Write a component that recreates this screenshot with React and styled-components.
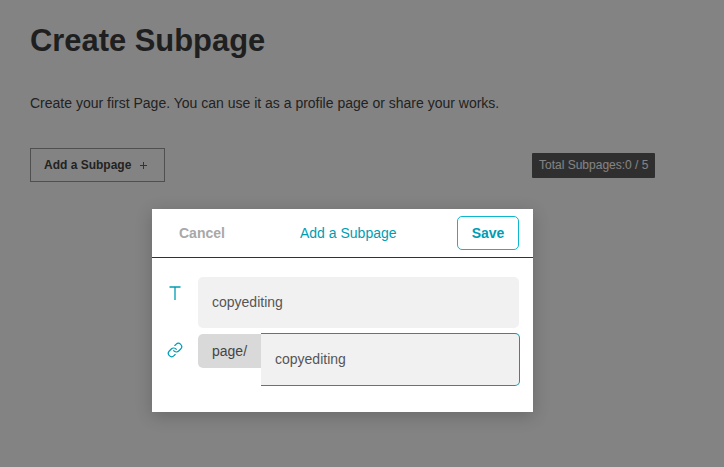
import React from "react";
import styled, { createGlobalStyle } from "styled-components";

const GlobalStyle = createGlobalStyle`
  html, body {
    margin: 0;
    padding: 0;
    background: #fff;
    font-family: "Liberation Sans", Arial, sans-serif;
  }
`;

const Page = styled.div`
  position: relative;
  width: 724px;
  height: 467px;
  overflow: hidden;
  box-sizing: border-box;
  padding: 24px 30px 0;
  color: #222;
`;

const Title = styled.h1`
  margin: 0;
  font-size: 30.9px;
  line-height: 34px;
  font-weight: 700;
  color: #3e3e3e;
`;

const Intro = styled.p`
  margin: 36px 0 0;
  font-size: 14px;
  line-height: 18px;
  color: #444;
`;

const ActionRow = styled.div`
  display: flex;
  align-items: center;
  justify-content: space-between;
  margin-top: 36px;
  padding-right: 39px;
`;

const AddButton = styled.button`
  display: flex;
  align-items: center;
  gap: 9px;
  box-sizing: border-box;
  width: 135px;
  height: 34px;
  padding: 0 0 0 13px;
  background: transparent;
  border: 1px solid #9a9a9a;
  font-family: inherit;
  font-size: 12px;
  font-weight: 700;
  color: #444;
`;

const Counter = styled.div`
  box-sizing: border-box;
  width: 123px;
  height: 25px;
  line-height: 25px;
  padding-left: 7px;
  border-radius: 1px;
  background: #5c5c5c;
  font-size: 12px;
  color: #fff;
  white-space: nowrap;
`;

const Overlay = styled.div`
  position: absolute;
  inset: 0;
  background: rgba(0, 0, 0, 0.487);
  display: flex;
  align-items: flex-start;
  justify-content: flex-start;
  padding: 209px 0 0 152px;
  box-sizing: border-box;
`;

const Modal = styled.div`
  width: 381px;
  height: 203px;
  background: #fff;
  box-shadow: 0 4px 16px rgba(0, 0, 0, 0.2);
`;

const ModalHeader = styled.div`
  display: grid;
  grid-template-columns: 121px auto 1fr;
  align-items: center;
  box-sizing: border-box;
  height: 49px;
  padding: 0 14px 0 27px;
  border-bottom: 1px solid #333;
`;

const CancelText = styled.span`
  font-size: 14px;
  font-weight: 700;
  color: #a8a8a8;
`;

const ModalTitle = styled.span`
  font-size: 14px;
  color: #009cb3;
`;

const SaveButton = styled.button`
  justify-self: end;
  box-sizing: border-box;
  width: 62px;
  height: 34px;
  padding: 0;
  background: #fff;
  border: 1px solid #0fb6d0;
  border-radius: 5px;
  font-family: inherit;
  font-size: 14px;
  font-weight: 700;
  color: #009cb3;
`;

const ModalBody = styled.div`
  display: flex;
  flex-direction: column;
  gap: 5px;
  padding: 19px 14px 0 7px;
`;

const FieldRow = styled.div`
  display: flex;
  align-items: flex-start;
`;

const IconSlot = styled.div`
  flex: none;
  width: 32px;
  height: 32px;
  margin-right: 7px;
  display: flex;
  align-items: center;
  justify-content: center;
  color: #009cb3;
`;

const LinkIcon = styled.svg`
  margin-top: 2px;
`;

const TitleInput = styled.div`
  flex: 1;
  height: 51px;
  padding-left: 14px;
  line-height: 51px;
  border-radius: 5px;
  background: #f1f1f1;
  font-size: 14px;
  color: #555;
`;

const Prefix = styled.div`
  flex: none;
  width: 63px;
  height: 34px;
  margin-top: 1px;
  box-sizing: border-box;
  padding-left: 14px;
  line-height: 34px;
  border-radius: 5px 0 0 5px;
  background: #d9d9d9;
  font-size: 14px;
  color: #444;
`;

const SlugInput = styled.div`
  flex: 1;
  height: 53px;
  margin-right: -1px;
  box-sizing: border-box;
  padding-left: 14px;
  line-height: 51px;
  border: 1px solid #009cb3;
  border-left: none;
  border-radius: 0 5px 5px 0;
  background: #f1f1f1;
  font-size: 14px;
  color: #555;
`;

export default function App() {
  return (
    <Page>
      <GlobalStyle />
      <Title>Create Subpage</Title>
      <Intro>Create your first Page. You can use it as a profile page or share your works.</Intro>
      <ActionRow>
        <AddButton>
          Add a Subpage
          <svg width="7" height="7" viewBox="0 0 7 7">
            <path d="M3.5 0v7M0 3.5h7" stroke="#666" strokeWidth="1" fill="none" />
          </svg>
        </AddButton>
        <Counter>Total Subpages:0 / 5</Counter>
      </ActionRow>
      <Overlay>
        <Modal>
          <ModalHeader>
            <CancelText>Cancel</CancelText>
            <ModalTitle>Add a Subpage</ModalTitle>
            <SaveButton>Save</SaveButton>
          </ModalHeader>
          <ModalBody>
            <FieldRow>
              <IconSlot>
                <svg width="12" height="14" viewBox="0 0 12 14">
                  <path d="M0.5 1h11M6 1v13" stroke="currentColor" strokeWidth="1.3" fill="none" />
                </svg>
              </IconSlot>
              <TitleInput>copyediting</TitleInput>
            </FieldRow>
            <FieldRow>
              <IconSlot>
                <LinkIcon width="16" height="16" viewBox="0 0 24 24" fill="none" stroke="currentColor" strokeWidth="1.8" strokeLinecap="round" strokeLinejoin="round">
                  <path d="M10 13a5 5 0 0 0 7.54.54l3-3a5 5 0 0 0-7.07-7.07l-1.72 1.71" />
                  <path d="M14 11a5 5 0 0 0-7.54-.54l-3 3a5 5 0 0 0 7.07 7.07l1.71-1.71" />
                </LinkIcon>
              </IconSlot>
              <Prefix>page/</Prefix>
              <SlugInput>copyediting</SlugInput>
            </FieldRow>
          </ModalBody>
        </Modal>
      </Overlay>
    </Page>
  );
}
